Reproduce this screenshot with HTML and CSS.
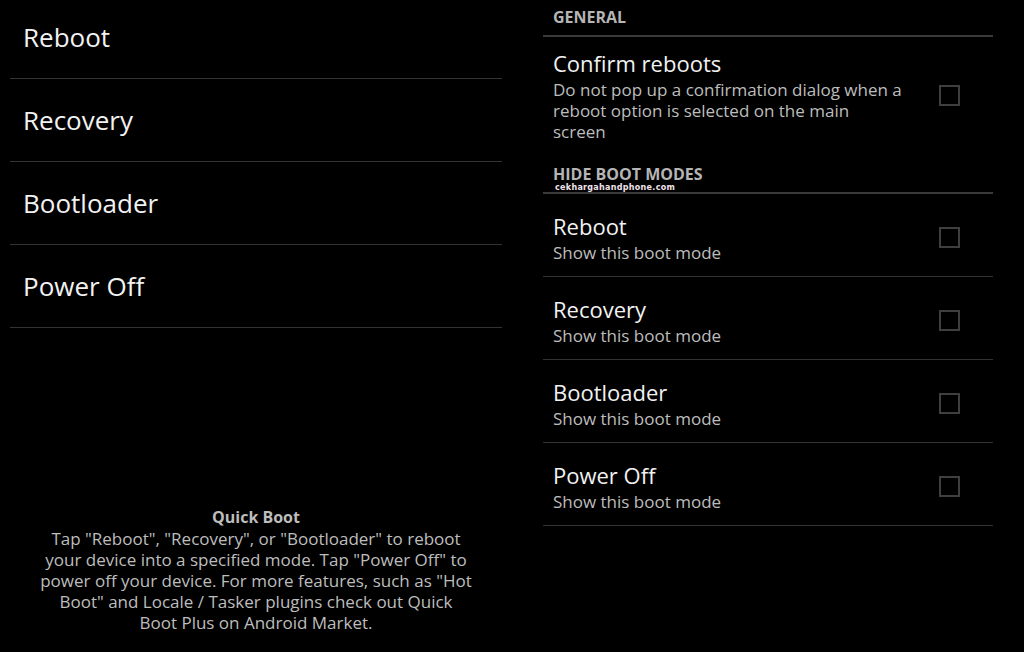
FILE: index.html
```html
<!DOCTYPE html>
<html lang="en">
<head>
    <meta charset="UTF-8">
    <title>Quick Boot</title>
    <link rel="stylesheet" href="styles.css">
</head>
<body>
    <div class="main-pane">
        <ul class="boot-list">
            <li class="boot-item">Reboot</li>
            <li class="boot-item">Recovery</li>
            <li class="boot-item">Bootloader</li>
            <li class="boot-item">Power Off</li>
        </ul>
        <div class="about">
            <div class="about-title">Quick Boot</div>
            <p class="about-text">Tap "Reboot", "Recovery", or "Bootloader" to reboot your device into a specified mode. Tap "Power Off" to power off your device. For more features, such as "Hot Boot" and Locale / Tasker plugins check out Quick Boot Plus on Android Market.</p>
        </div>
    </div>

    <div class="settings-pane">
        <div class="category">GENERAL</div>
        <div class="pref pref-tall">
            <div class="pref-text">
                <div class="pref-title">Confirm reboots</div>
                <div class="pref-summary">Do not pop up a confirmation dialog when a reboot option is selected on the main screen</div>
            </div>
            <span class="checkbox"></span>
        </div>

        <div class="category">
            HIDE BOOT MODES
            <span class="watermark">cekhargahandphone.com</span>
        </div>
        <div class="pref">
            <div class="pref-text">
                <div class="pref-title">Reboot</div>
                <div class="pref-summary">Show this boot mode</div>
            </div>
            <span class="checkbox"></span>
        </div>
        <div class="pref">
            <div class="pref-text">
                <div class="pref-title">Recovery</div>
                <div class="pref-summary">Show this boot mode</div>
            </div>
            <span class="checkbox"></span>
        </div>
        <div class="pref">
            <div class="pref-text">
                <div class="pref-title">Bootloader</div>
                <div class="pref-summary">Show this boot mode</div>
            </div>
            <span class="checkbox"></span>
        </div>
        <div class="pref">
            <div class="pref-text">
                <div class="pref-title">Power Off</div>
                <div class="pref-summary">Show this boot mode</div>
            </div>
            <span class="checkbox"></span>
        </div>
    </div>
</body>
</html>
```

FILE: styles.css
```css
body {
    font-family: "Open Sans", "Noto Sans", sans-serif;
    background: #000;
    color: #f2f2f2;
    margin: 0;
    height: 652px;
    overflow: hidden;
    display: flex;
    padding: 0 31px 0 10px;
    gap: 41px;
}

.main-pane {
    width: 492px;
    display: flex;
    flex-direction: column;
    justify-content: space-between;
}

.boot-list {
    list-style: none;
    margin: -4px 0 0 0;
    padding: 0;
}

.boot-item {
    height: 82px;
    display: flex;
    align-items: center;
    padding-left: 13px;
    font-size: 26px;
    border-bottom: 1px solid #333;
}

.about {
    text-align: center;
    color: #bdbdbd;
    font-size: 17px;
    line-height: 21px;
    padding: 0 29px 19px 29px;
}

.about-title {
    font-weight: bold;
    font-size: 16px;
}

.about-text {
    margin: 0;
}

.settings-pane {
    flex: 1;
}

.category {
    position: relative;
    font-size: 16px;
    font-weight: bold;
    color: #b5b5b5;
    padding: 7px 10px 0 10px;
    height: 28px;
    line-height: 20px;
    border-bottom: 2px solid #3a3a3a;
}

.watermark {
    position: absolute;
    left: 12px;
    top: 27px;
    font-size: 8px;
    line-height: 8px;
    font-weight: bold;
    letter-spacing: 0.3px;
    color: #f3e4ec;
    font-family: Verdana, "DejaVu Sans", sans-serif;
}

.pref {
    display: flex;
    align-items: center;
    padding: 18px 33px 13px 10px;
    border-bottom: 1px solid #333;
}

.pref-tall {
    padding-top: 12px;
    padding-bottom: 15px;
    border-bottom: none;
}

.pref-text {
    flex: 1;
}

.pref-title {
    font-size: 22px;
    line-height: 28px;
    margin-bottom: 2px;
}

.pref-summary {
    font-size: 17px;
    line-height: 21px;
    color: #bdbdbd;
    max-width: 350px;
}

.checkbox {
    width: 17px;
    height: 17px;
    border: 2px solid #3f3f3f;
}
```
